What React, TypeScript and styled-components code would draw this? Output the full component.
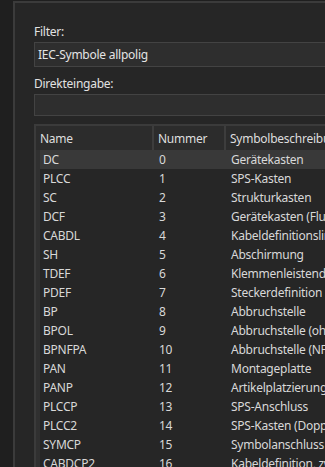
import React from "react";
import styled, {createGlobalStyle} from "styled-components";

const GlobalStyle = createGlobalStyle`
  html, body {
    margin: 0;
    padding: 0;
    background: #1f1f1f;
    overflow: hidden;
  }
  body {
    font-family: "Noto Sans", "Open Sans", sans-serif;
    font-size: 12px;
    letter-spacing: -0.25px;
    color: #dcdcdc;
  }
`;

const rows = [
    ["DC", "0", "Gerätekasten"],
    ["PLCC", "1", "SPS-Kasten"],
    ["SC", "2", "Strukturkasten"],
    ["DCF", "3", "Gerätekasten (Fluidtechnik)"],
    ["CABDL", "4", "Kabeldefinitionslinie"],
    ["SH", "5", "Abschirmung"],
    ["TDEF", "6", "Klemmenleistendefinition"],
    ["PDEF", "7", "Steckerdefinition"],
    ["BP", "8", "Abbruchstelle"],
    ["BPOL", "9", "Abbruchstelle (ohne Potential)"],
    ["BPNFPA", "10", "Abbruchstelle (NFPA)"],
    ["PAN", "11", "Montageplatte"],
    ["PANP", "12", "Artikelplatzierung"],
    ["PLCCP", "13", "SPS-Anschluss"],
    ["PLCC2", "14", "SPS-Kasten (Doppelt)"],
    ["SYMCP", "15", "Symbolanschluss"],
    ["CABDCP2", "16", "Kabeldefinition, zweiseitig"],
    ["CABDCP", "17", "Kabeldefinition"],
];

const Page = styled.div`
  height: 467px;
  padding: 1px 0 0 13px;
  box-sizing: border-box;
  overflow: hidden;
`;

const Panel = styled.div`
  width: 400px;
  height: 600px;
  border: 2px solid #3b3b3b;
  background: #262626;
  padding: 21px 0 0 19px;
  display: flex;
  flex-direction: column;
`;

const Label = styled.div<{ $gap: number }>`
  line-height: 16px;
  margin-top: ${p => p.$gap}px;
  margin-bottom: 2px;
  color: #e2e2e2;
`;

const Field = styled.div<{ $h: number }>`
  height: ${p => p.$h}px;
  box-sizing: border-box;
  border: 1px solid #434343;
  background: #2e2e2e;
  padding: 0 3px;
  display: flex;
  align-items: center;
  color: #e4e4e4;
`;

const Table = styled.div`
  margin-top: 8px;
  border: 2px solid #3b3b3b;
  border-right: none;
  display: flex;
  flex-direction: column;
`;

const Header = styled.div`
  display: grid;
  grid-template-columns: 116px 2px 70px 2px 1fr;
  height: 24px;
  background: #2c2c2c;
`;

const HeadCell = styled.div`
  padding-left: 4px;
  display: flex;
  align-items: center;
  white-space: nowrap;
  overflow: hidden;
  color: #dedede;
`;

const Sep = styled.div`
  background: #3d3d3d;
`;

const Body = styled.div`
  display: flex;
  flex-direction: column;
  border-left: 4px solid #303030;
`;

const Row = styled.div<{ $selected?: boolean }>`
  display: grid;
  grid-template-columns: 114px 72px 1fr;
  height: 19px;
  align-items: center;
  background: ${p => p.$selected ? "#393939" : "transparent"};
  white-space: nowrap;
`;

const Cell = styled.div<{ $pad: number }>`
  padding-left: ${p => p.$pad}px;
  overflow: hidden;
  color: #d8d8d8;
`;

export default function App() {
    return (
        <Page>
            <GlobalStyle/>
            <Panel>
                <Label $gap={0}>Filter:</Label>
                <Field $h={25}>IEC-Symbole allpolig</Field>
                <Label $gap={9}>Direkteingabe:</Label>
                <Field $h={22}/>
                <Table>
                    <Header>
                        <HeadCell>Name</HeadCell>
                        <Sep/>
                        <HeadCell>Nummer</HeadCell>
                        <Sep/>
                        <HeadCell>Symbolbeschreibung</HeadCell>
                    </Header>
                    <Body>
                        {rows.map((r, i) => (
                            <Row key={r[0]} $selected={i === 0}>
                                <Cell $pad={3}>{r[0]}</Cell>
                                <Cell $pad={5}>{r[1]}</Cell>
                                <Cell $pad={5}>{r[2]}</Cell>
                            </Row>
                        ))}
                    </Body>
                </Table>
            </Panel>
        </Page>
    );
}
